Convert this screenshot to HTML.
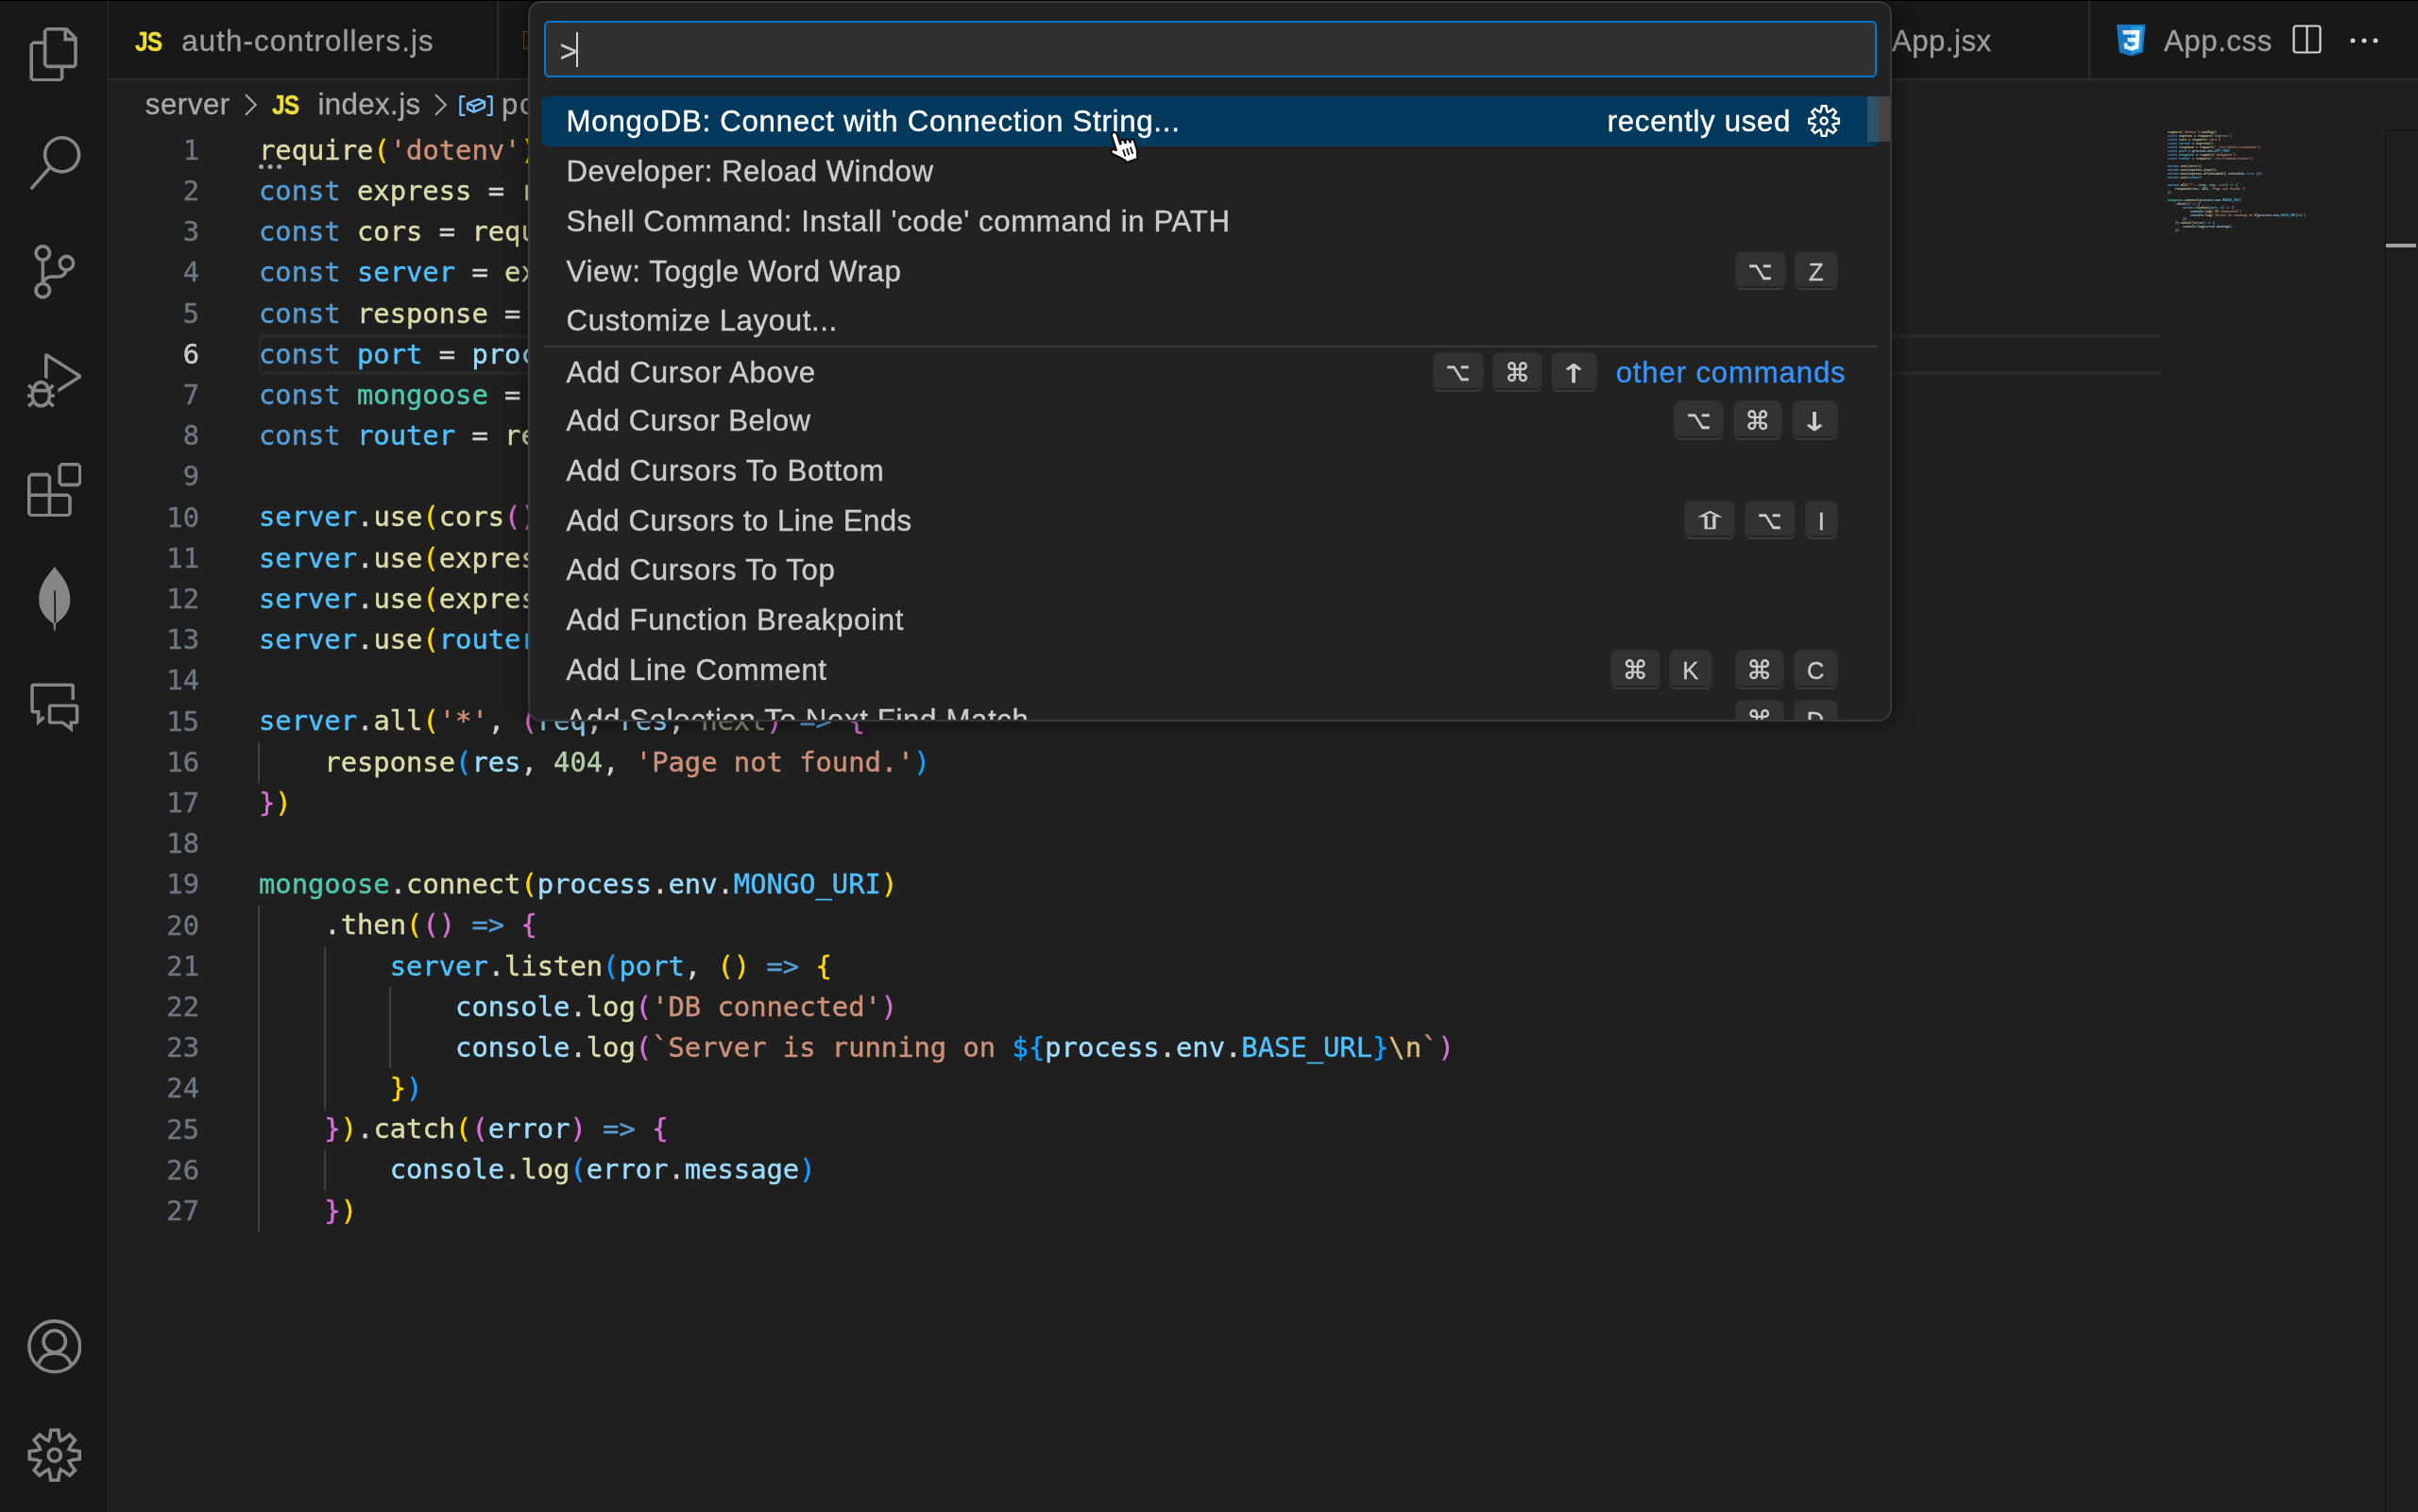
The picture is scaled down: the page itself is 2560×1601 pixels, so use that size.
<!DOCTYPE html>
<html lang="en"><head><meta charset="utf-8"><title>index.js — VS Code</title>
<style>
html,body{margin:0;padding:0;background:#1f1f1f;}
body{width:2560px;height:1601px;overflow:hidden;position:relative;font-family:'Liberation Sans', sans-serif;}
#root{position:absolute;left:0;top:0;width:2560px;height:1601px;overflow:hidden;will-change:transform;}
.b{position:absolute;display:block;}
.tx{position:absolute;white-space:pre;display:block;-webkit-text-stroke:0.35px currentColor;}
.ln{position:absolute;left:120px;width:91px;text-align:right;-webkit-text-stroke:0.42px currentColor;font-family:'DejaVu Sans Mono', 'Liberation Mono', monospace;font-size:28.8px;line-height:43.2px;height:43.2px;}
.code{position:absolute;font-family:'DejaVu Sans Mono', 'Liberation Mono', monospace;font-size:28.8px;line-height:43.2px;white-space:pre;color:#d4d4d4;-webkit-text-stroke:0.42px currentColor;}
.cl{height:43.2px;}
.mm{font-weight:bold;opacity:.78;}
.mm .b1,.mm .b2,.mm .b3{color:#c8c8c8 !important;}
.qi{background:#222222;border:2px solid #383838;border-radius:14px;box-shadow:0 0 19px 5px rgba(0,0,0,.36);box-sizing:border-box;}
.key{position:absolute;box-sizing:border-box;background:#323232;border:1.6px solid #2c2c2c;border-bottom:2.4px solid #3a3a3a;border-radius:7.2px;box-shadow:inset 0 -2px 0 rgba(0,0,0,.25);color:#cccccc;font-family:'DejaVu Sans', 'Liberation Sans', sans-serif;text-align:center;line-height:36px;overflow:hidden;}
.k{color:#569cd6}.f{color:#dcdcaa}.s{color:#ce9178}.v{color:#9cdcfe}.c{color:#4fc1ff}.t{color:#4ec9b0}.n{color:#b5cea8}.p{color:#d4d4d4}.b1{color:#ffd700}.b2{color:#da70d6}.b3{color:#179fff}.e{color:#d7ba7d}.u{color:#8f8f73}</style></head>
<body>
<div id="root">
<div class="b" style="left:274.00px;top:353.80px;width:2126.00px;height:43.20px;background:transparent;box-sizing:border-box;border:4.2px solid #282828;border-left-width:2.4px;"></div>
<div class="b" style="left:2287.50px;top:137.80px;width:272.50px;height:1463.20px;background:#1f1f1f;"></div>
<div class="b" style="left:273.40px;top:785.80px;width:2.00px;height:43.20px;background:#404040;"></div>
<div class="b" style="left:273.40px;top:958.60px;width:2.00px;height:345.60px;background:#404040;"></div>
<div class="b" style="left:342.75px;top:1001.80px;width:2.00px;height:172.80px;background:#404040;"></div>
<div class="b" style="left:412.10px;top:1045.00px;width:2.00px;height:86.40px;background:#404040;"></div>
<div class="b" style="left:342.75px;top:1217.80px;width:2.00px;height:43.20px;background:#404040;"></div>
<div class="ln" style="top:137.80px;color:#6e7681">1</div>
<div class="ln" style="top:181.00px;color:#6e7681">2</div>
<div class="ln" style="top:224.20px;color:#6e7681">3</div>
<div class="ln" style="top:267.40px;color:#6e7681">4</div>
<div class="ln" style="top:310.60px;color:#6e7681">5</div>
<div class="ln" style="top:353.80px;color:#cccccc">6</div>
<div class="ln" style="top:397.00px;color:#6e7681">7</div>
<div class="ln" style="top:440.20px;color:#6e7681">8</div>
<div class="ln" style="top:483.40px;color:#6e7681">9</div>
<div class="ln" style="top:526.60px;color:#6e7681">10</div>
<div class="ln" style="top:569.80px;color:#6e7681">11</div>
<div class="ln" style="top:613.00px;color:#6e7681">12</div>
<div class="ln" style="top:656.20px;color:#6e7681">13</div>
<div class="ln" style="top:699.40px;color:#6e7681">14</div>
<div class="ln" style="top:742.60px;color:#6e7681">15</div>
<div class="ln" style="top:785.80px;color:#6e7681">16</div>
<div class="ln" style="top:829.00px;color:#6e7681">17</div>
<div class="ln" style="top:872.20px;color:#6e7681">18</div>
<div class="ln" style="top:915.40px;color:#6e7681">19</div>
<div class="ln" style="top:958.60px;color:#6e7681">20</div>
<div class="ln" style="top:1001.80px;color:#6e7681">21</div>
<div class="ln" style="top:1045.00px;color:#6e7681">22</div>
<div class="ln" style="top:1088.20px;color:#6e7681">23</div>
<div class="ln" style="top:1131.40px;color:#6e7681">24</div>
<div class="ln" style="top:1174.60px;color:#6e7681">25</div>
<div class="ln" style="top:1217.80px;color:#6e7681">26</div>
<div class="ln" style="top:1261.00px;color:#6e7681">27</div>
<div class="code" style="left:274.0px;top:137.8px"><div class="cl"><span class="f">require</span><span class="b1">(</span><span class="s">'dotenv'</span><span class="b1">)</span><span class="p">.</span><span class="f">config</span><span class="b1">(</span><span class="b1">)</span></div><div class="cl"><span class="k">const</span><span class="f"> express</span><span class="p"> = </span><span class="f">require</span><span class="b1">(</span><span class="s">'express'</span><span class="b1">)</span></div><div class="cl"><span class="k">const</span><span class="f"> cors</span><span class="p"> = </span><span class="f">require</span><span class="b1">(</span><span class="s">'cors'</span><span class="b1">)</span></div><div class="cl"><span class="k">const</span><span class="c"> server</span><span class="p"> = </span><span class="f">express</span><span class="b1">(</span><span class="b1">)</span></div><div class="cl"><span class="k">const</span><span class="f"> response</span><span class="p"> = </span><span class="f">require</span><span class="b1">(</span><span class="s">'./src/utils/responses'</span><span class="b1">)</span></div><div class="cl"><span class="k">const</span><span class="c"> port</span><span class="p"> = </span><span class="v">process</span><span class="p">.</span><span class="v">env</span><span class="p">.</span><span class="c">APP_PORT</span></div><div class="cl"><span class="k">const</span><span class="t"> mongoose</span><span class="p"> = </span><span class="f">require</span><span class="b1">(</span><span class="s">'mongoose'</span><span class="b1">)</span></div><div class="cl"><span class="k">const</span><span class="c"> router</span><span class="p"> = </span><span class="f">require</span><span class="b1">(</span><span class="s">'./src/routes/routes'</span><span class="b1">)</span></div><div class="cl"></div><div class="cl"><span class="c">server</span><span class="p">.</span><span class="f">use</span><span class="b1">(</span><span class="f">cors</span><span class="b2">(</span><span class="b2">)</span><span class="b1">)</span></div><div class="cl"><span class="c">server</span><span class="p">.</span><span class="f">use</span><span class="b1">(</span><span class="f">express</span><span class="p">.</span><span class="f">json</span><span class="b2">(</span><span class="b2">)</span><span class="b1">)</span></div><div class="cl"><span class="c">server</span><span class="p">.</span><span class="f">use</span><span class="b1">(</span><span class="f">express</span><span class="p">.</span><span class="f">urlencoded</span><span class="b2">(</span><span class="b3">{</span><span class="v"> extended</span><span class="p">:</span><span class="k"> true</span><span class="b3"> }</span><span class="b2">)</span><span class="b1">)</span></div><div class="cl"><span class="c">server</span><span class="p">.</span><span class="f">use</span><span class="b1">(</span><span class="c">router</span><span class="b1">)</span></div><div class="cl"></div><div class="cl"><span class="c">server</span><span class="p">.</span><span class="f">all</span><span class="b1">(</span><span class="s">'*'</span><span class="p">, </span><span class="b2">(</span><span class="v">req</span><span class="p">, </span><span class="v">res</span><span class="p">, </span><span class="u">next</span><span class="b2">)</span><span class="k"> =&gt;</span><span class="b2"> {</span></div><div class="cl"><span class="f">    response</span><span class="b3">(</span><span class="v">res</span><span class="p">, </span><span class="n">404</span><span class="p">, </span><span class="s">'Page not found.'</span><span class="b3">)</span></div><div class="cl"><span class="b2">}</span><span class="b1">)</span></div><div class="cl"></div><div class="cl"><span class="t">mongoose</span><span class="p">.</span><span class="f">connect</span><span class="b1">(</span><span class="v">process</span><span class="p">.</span><span class="v">env</span><span class="p">.</span><span class="c">MONGO_URI</span><span class="b1">)</span></div><div class="cl"><span class="p">    .</span><span class="f">then</span><span class="b1">(</span><span class="b2">(</span><span class="b2">)</span><span class="k"> =&gt;</span><span class="b2"> {</span></div><div class="cl"><span class="c">        server</span><span class="p">.</span><span class="f">listen</span><span class="b3">(</span><span class="c">port</span><span class="p">, </span><span class="b1">(</span><span class="b1">)</span><span class="k"> =&gt;</span><span class="b1"> {</span></div><div class="cl"><span class="v">            console</span><span class="p">.</span><span class="f">log</span><span class="b2">(</span><span class="s">'DB connected'</span><span class="b2">)</span></div><div class="cl"><span class="v">            console</span><span class="p">.</span><span class="f">log</span><span class="b2">(</span><span class="s">`Server is running on </span><span class="b3">${</span><span class="v">process</span><span class="p">.</span><span class="v">env</span><span class="p">.</span><span class="c">BASE_URL</span><span class="b3">}</span><span class="e">\n</span><span class="s">`</span><span class="b2">)</span></div><div class="cl"><span class="b1">        }</span><span class="b3">)</span></div><div class="cl"><span class="b2">    }</span><span class="b1">)</span><span class="p">.</span><span class="f">catch</span><span class="b1">(</span><span class="b2">(</span><span class="v">error</span><span class="b2">)</span><span class="k"> =&gt;</span><span class="b2"> {</span></div><div class="cl"><span class="v">        console</span><span class="p">.</span><span class="f">log</span><span class="b3">(</span><span class="v">error</span><span class="p">.</span><span class="v">message</span><span class="b3">)</span></div><div class="cl"><span class="b2">    }</span><span class="b1">)</span></div></div>
<svg class="b" style="left:273.60px;top:173.80px;" width="25.00" height="5.00" viewBox="0 0 25 5" preserveAspectRatio="none"><circle cx="2.5" cy="2.5" r="2.5" fill="#a6a6a6"/><circle cx="12.1" cy="2.5" r="2.5" fill="#a6a6a6"/><circle cx="21.7" cy="2.5" r="2.5" fill="#a6a6a6"/></svg>
<div class="code mm" style="left:2294.5px;top:137.6px;transform:scale(0.11535,0.09259);transform-origin:0 0;"><div class="cl"><span class="f">require</span><span class="b1">(</span><span class="s">'dotenv'</span><span class="b1">)</span><span class="p">.</span><span class="f">config</span><span class="b1">(</span><span class="b1">)</span></div><div class="cl"><span class="k">const</span><span class="f"> express</span><span class="p"> = </span><span class="f">require</span><span class="b1">(</span><span class="s">'express'</span><span class="b1">)</span></div><div class="cl"><span class="k">const</span><span class="f"> cors</span><span class="p"> = </span><span class="f">require</span><span class="b1">(</span><span class="s">'cors'</span><span class="b1">)</span></div><div class="cl"><span class="k">const</span><span class="c"> server</span><span class="p"> = </span><span class="f">express</span><span class="b1">(</span><span class="b1">)</span></div><div class="cl"><span class="k">const</span><span class="f"> response</span><span class="p"> = </span><span class="f">require</span><span class="b1">(</span><span class="s">'./src/utils/responses'</span><span class="b1">)</span></div><div class="cl"><span class="k">const</span><span class="c"> port</span><span class="p"> = </span><span class="v">process</span><span class="p">.</span><span class="v">env</span><span class="p">.</span><span class="c">APP_PORT</span></div><div class="cl"><span class="k">const</span><span class="t"> mongoose</span><span class="p"> = </span><span class="f">require</span><span class="b1">(</span><span class="s">'mongoose'</span><span class="b1">)</span></div><div class="cl"><span class="k">const</span><span class="c"> router</span><span class="p"> = </span><span class="f">require</span><span class="b1">(</span><span class="s">'./src/routes/routes'</span><span class="b1">)</span></div><div class="cl"></div><div class="cl"><span class="c">server</span><span class="p">.</span><span class="f">use</span><span class="b1">(</span><span class="f">cors</span><span class="b2">(</span><span class="b2">)</span><span class="b1">)</span></div><div class="cl"><span class="c">server</span><span class="p">.</span><span class="f">use</span><span class="b1">(</span><span class="f">express</span><span class="p">.</span><span class="f">json</span><span class="b2">(</span><span class="b2">)</span><span class="b1">)</span></div><div class="cl"><span class="c">server</span><span class="p">.</span><span class="f">use</span><span class="b1">(</span><span class="f">express</span><span class="p">.</span><span class="f">urlencoded</span><span class="b2">(</span><span class="b3">{</span><span class="v"> extended</span><span class="p">:</span><span class="k"> true</span><span class="b3"> }</span><span class="b2">)</span><span class="b1">)</span></div><div class="cl"><span class="c">server</span><span class="p">.</span><span class="f">use</span><span class="b1">(</span><span class="c">router</span><span class="b1">)</span></div><div class="cl"></div><div class="cl"><span class="c">server</span><span class="p">.</span><span class="f">all</span><span class="b1">(</span><span class="s">'*'</span><span class="p">, </span><span class="b2">(</span><span class="v">req</span><span class="p">, </span><span class="v">res</span><span class="p">, </span><span class="u">next</span><span class="b2">)</span><span class="k"> =&gt;</span><span class="b2"> {</span></div><div class="cl"><span class="f">    response</span><span class="b3">(</span><span class="v">res</span><span class="p">, </span><span class="n">404</span><span class="p">, </span><span class="s">'Page not found.'</span><span class="b3">)</span></div><div class="cl"><span class="b2">}</span><span class="b1">)</span></div><div class="cl"></div><div class="cl"><span class="t">mongoose</span><span class="p">.</span><span class="f">connect</span><span class="b1">(</span><span class="v">process</span><span class="p">.</span><span class="v">env</span><span class="p">.</span><span class="c">MONGO_URI</span><span class="b1">)</span></div><div class="cl"><span class="p">    .</span><span class="f">then</span><span class="b1">(</span><span class="b2">(</span><span class="b2">)</span><span class="k"> =&gt;</span><span class="b2"> {</span></div><div class="cl"><span class="c">        server</span><span class="p">.</span><span class="f">listen</span><span class="b3">(</span><span class="c">port</span><span class="p">, </span><span class="b1">(</span><span class="b1">)</span><span class="k"> =&gt;</span><span class="b1"> {</span></div><div class="cl"><span class="v">            console</span><span class="p">.</span><span class="f">log</span><span class="b2">(</span><span class="s">'DB connected'</span><span class="b2">)</span></div><div class="cl"><span class="v">            console</span><span class="p">.</span><span class="f">log</span><span class="b2">(</span><span class="s">`Server is running on </span><span class="b3">${</span><span class="v">process</span><span class="p">.</span><span class="v">env</span><span class="p">.</span><span class="c">BASE_URL</span><span class="b3">}</span><span class="e">\n</span><span class="s">`</span><span class="b2">)</span></div><div class="cl"><span class="b1">        }</span><span class="b3">)</span></div><div class="cl"><span class="b2">    }</span><span class="b1">)</span><span class="p">.</span><span class="f">catch</span><span class="b1">(</span><span class="b2">(</span><span class="v">error</span><span class="b2">)</span><span class="k"> =&gt;</span><span class="b2"> {</span></div><div class="cl"><span class="v">        console</span><span class="p">.</span><span class="f">log</span><span class="b3">(</span><span class="v">error</span><span class="p">.</span><span class="v">message</span><span class="b3">)</span></div><div class="cl"><span class="b2">    }</span><span class="b1">)</span></div></div>
<div class="b" style="left:2524.80px;top:137.60px;width:1.40px;height:1463.40px;background:#101010;"></div>
<div class="b" style="left:2525.00px;top:137.60px;width:33.50px;height:1.20px;background:#101010;"></div>
<div class="b" style="left:2526.00px;top:258.00px;width:32.40px;height:4.40px;background:#a0a0a0;"></div>
<span class="tx " style="left:153.80px;top:91.19px;font-size:31.2px;line-height:40.0px;color:#a9a9a9;font-family:'Liberation Sans', sans-serif;letter-spacing:0.557px;">server</span>
<svg class="b" style="left:258.50px;top:99.00px;" width="13.50" height="24.00" viewBox="0 0 13.5 24" preserveAspectRatio="none"><path d="M1 1.2 L11.8 12 L1 22.8" fill="none" stroke="#a9a9a9" stroke-width="2.0"/></svg>
<span class="tx " style="left:287.70px;top:90.94px;font-size:29.6px;line-height:40.0px;color:#f1dd35;font-family:'Liberation Sans', sans-serif;font-weight:bold;letter-spacing:-1.2px;transform:scaleX(.83);transform-origin:0 0;">JS</span>
<span class="tx " style="left:336.50px;top:91.19px;font-size:31.2px;line-height:40.0px;color:#a9a9a9;font-family:'Liberation Sans', sans-serif;letter-spacing:0.406px;">index.js</span>
<svg class="b" style="left:460.00px;top:99.00px;" width="13.50" height="24.00" viewBox="0 0 13.5 24" preserveAspectRatio="none"><path d="M1 1.2 L11.8 12 L1 22.8" fill="none" stroke="#a9a9a9" stroke-width="2.0"/></svg>
<svg class="b" style="left:486.00px;top:100.80px;" width="36.00" height="22.00" viewBox="0 0 36 22" preserveAspectRatio="none"><g fill="none" stroke="#75beff" stroke-width="2.3" stroke-linejoin="round"><path d="M6.5 1.2 H1.4 V20.8 H6.5"/><path d="M29.5 1.2 H34.6 V20.8 H29.5"/><path d="M9 8.5 L20.5 4.2 L27 6.6 L15.8 11.4 Z"/><path d="M9 8.5 V14.4 L15.8 17.6 V11.4"/><path d="M15.8 17.6 L27 12.6 V6.6"/></g></svg>
<span class="tx " style="left:531.00px;top:91.19px;font-size:31.2px;line-height:40.0px;color:#a9a9a9;font-family:'Liberation Sans', sans-serif;letter-spacing:1.562px;">port</span>
<div class="b" style="left:115.20px;top:0.00px;width:2444.80px;height:84.40px;background:#181818;"></div>
<div class="b" style="left:115.20px;top:82.80px;width:2444.80px;height:2.40px;background:#2b2b2b;"></div>
<span class="tx " style="left:143.30px;top:23.74px;font-size:29.6px;line-height:40.0px;color:#f1dd35;font-family:'Liberation Sans', sans-serif;font-weight:bold;letter-spacing:-1.2px;transform:scaleX(.83);transform-origin:0 0;">JS</span>
<span class="tx " style="left:192.30px;top:23.59px;font-size:31.2px;line-height:40.0px;color:#9d9d9d;font-family:'Liberation Sans', sans-serif;letter-spacing:1.124px;">auth-controllers.js</span>
<div class="b" style="left:526.20px;top:1.00px;width:2.00px;height:82.00px;background:#2b2b2b;"></div>
<div class="b" style="left:554.00px;top:33.00px;width:8.00px;height:17.00px;background:transparent;border:1.6px solid #6a4f2c;border-right:none;"></div>
<span class="tx " style="left:2003.00px;top:23.59px;font-size:31.2px;line-height:40.0px;color:#9d9d9d;font-family:'Liberation Sans', sans-serif;letter-spacing:0.460px;">App.jsx</span>
<div class="b" style="left:2211.30px;top:1.00px;width:2.00px;height:82.00px;background:#2b2b2b;"></div>
<svg class="b" style="left:2240.80px;top:26.00px;" width="30.50" height="33.60" viewBox="1 0 22 24.5" preserveAspectRatio="none"><path d="M1 0 H23 L21 21.5 L12 24.5 L3 21.5 Z" fill="#1b76c2"/><path d="M12 1.7 H21.2 L19.5 20.2 L12 22.6 Z" fill="#2b9fdf"/><path d="M5.6 4.4 H12 V7.7 H5.9 Z M9.3 10.3 H12 V13.5 H9.5 Z M6.4 14.2 H9.2 L9.35 16.1 L12 16.9 V20.2 L6.8 18.5 Z" fill="#e6e6e6"/><path d="M12 4.4 H18.6 L17.7 18.5 L12 20.2 V16.9 L14.8 16.1 L15.1 13.5 H12 V10.3 H15.3 L15.5 7.7 H12 Z" fill="#ffffff"/></svg>
<span class="tx " style="left:2291.00px;top:23.59px;font-size:31.2px;line-height:40.0px;color:#9d9d9d;font-family:'Liberation Sans', sans-serif;letter-spacing:0.550px;">App.css</span>
<svg class="b" style="left:2426.50px;top:26.00px;" width="31.00" height="31.00" viewBox="0 0 31 31" preserveAspectRatio="none"><rect x="1.5" y="1.5" width="28" height="28" rx="2.5" fill="none" stroke="#d4d4d4" stroke-width="2.2"/><path d="M15.5 1.5 V29.5" stroke="#d4d4d4" stroke-width="2.2"/></svg>
<svg class="b" style="left:2488.30px;top:39.90px;" width="30.00" height="6.00" viewBox="0 0 30 6" preserveAspectRatio="none"><circle cx="3.0" cy="3" r="2.5" fill="#d4d4d4"/><circle cx="15.0" cy="3" r="2.5" fill="#d4d4d4"/><circle cx="27.0" cy="3" r="2.5" fill="#d4d4d4"/></svg>
<div class="b" style="left:0.00px;top:0.00px;width:114.00px;height:1601.00px;background:#181818;"></div>
<div class="b" style="left:113.60px;top:0.00px;width:1.60px;height:1601.00px;background:#2b2b2b;"></div>
<svg class="b" style="left:28.80px;top:28.80px;" width="57.60" height="57.60" viewBox="0 0 24 24" preserveAspectRatio="none"><path fill="#868686" d="M17.5 0h-9L7 1.5V6H2.5L1 7.5v15.07L2.5 24h12.07L16 22.57V18h4.7l1.3-1.43V4.5L17.5 0zm0 2.12l2.38 2.38H17.5V2.12zm-3 20.38h-12v-15H7v9.07L8.5 18h6v4.5zm6-6h-12v-15H16V6h4.5v10.5z"/></svg>
<svg class="b" style="left:28.80px;top:144.00px;" width="57.60" height="57.60" viewBox="0 0 24 24" preserveAspectRatio="none"><path fill="#868686" d="M15.25 0a8.25 8.25 0 0 0-6.18 13.72L1 22.88l1.12 1 8.05-9.12A8.251 8.251 0 1 0 15.25.01V0zm0 15a6.75 6.75 0 1 1 0-13.5 6.75 6.75 0 0 1 0 13.5z"/></svg>
<svg class="b" style="left:28.80px;top:259.20px;" width="57.60" height="57.60" viewBox="0 0 24 24" preserveAspectRatio="none"><path fill="#868686" d="M21.007 8.222A3.738 3.738 0 0 0 15.045 5.2a3.737 3.737 0 0 0 1.156 6.583 2.988 2.988 0 0 1-2.668 1.67h-2.99a4.456 4.456 0 0 0-2.989 1.165V7.4a3.737 3.737 0 1 0-1.494 0v9.117a3.776 3.776 0 1 0 1.816.099 2.99 2.99 0 0 1 2.668-1.667h2.99a4.484 4.484 0 0 0 4.223-3.039 3.736 3.736 0 0 0 3.25-3.687zM4.565 3.738a2.242 2.242 0 1 1 4.484 0 2.242 2.242 0 0 1-4.484 0zm4.484 16.441a2.242 2.242 0 1 1-4.484 0 2.242 2.242 0 0 1 4.484 0zm8.221-9.715a2.242 2.242 0 1 1 0-4.485 2.242 2.242 0 0 1 0 4.485z"/></svg>
<svg class="b" style="left:28.80px;top:374.40px;" width="57.60" height="57.60" viewBox="0 0 24 24" preserveAspectRatio="none"><path fill="#868686" d="M10.94 13.5l-1.32 1.32a3.73 3.73 0 0 0-7.24 0L1.06 13.5 0 14.56l1.72 1.72-.22.22V18H0v1.5h1.5v.08c.077.489.214.966.41 1.42L0 22.94 1.06 24l1.65-1.65A4.308 4.308 0 0 0 6 24a4.31 4.31 0 0 0 3.29-1.65L10.94 24 12 22.94 10.09 21c.198-.464.336-.951.41-1.45v-.1H12V18h-1.5v-1.5l-.22-.22L12 14.56l-1.06-1.06zM6 13.5a2.25 2.25 0 0 1 2.25 2.25h-4.5A2.25 2.25 0 0 1 6 13.5zm3 6a3.33 3.33 0 0 1-3 3 3.33 3.33 0 0 1-3-3v-2.25h6v2.25zm14.76-9.9v1.26L13.5 17.37V15.6l8.5-5.37L9 2v9.46a5.07 5.07 0 0 0-1.5-.72V.63L8.64 0l15.12 9.6z"/></svg>
<svg class="b" style="left:28.80px;top:489.60px;" width="57.60" height="57.60" viewBox="0 0 24 24" preserveAspectRatio="none"><path fill="#868686" d="M13.5 1.5L15 0h7.5L24 1.5V9l-1.5 1.5H15L13.5 9V1.5zm1.5 0V9h7.5V1.5H15zM0 15V6l1.5-1.5H9L10.5 6v7.5H18l1.5 1.5v7.5L18 24H1.5L0 22.5V15zm9-1.5V6H1.5v7.5H9zM9 15H1.5v7.5H9V15zm1.5 7.5H18V15h-7.5v7.5z"/></svg>
<svg class="b" style="left:28.80px;top:604.80px;overflow:visible;" width="57.60" height="57.60" viewBox="0 0 24 24" preserveAspectRatio="none"><path fill="#868686" d="M12 -2.2 C13.2 0.2 18.9 4.6 18.9 12.6 C18.9 18.4 14.6 21.6 12.55 23 L12.3 26.2 L11.7 26.2 L11.45 23 C9.4 21.6 5.1 18.4 5.1 12.6 C5.1 4.6 10.8 0.2 12 -2.2 Z"/><path fill="#181818" d="M11.75 8.2 L12.45 8.6 L12.6 22.2 L11.85 22.9 Z"/></svg>
<svg class="b" style="left:28.80px;top:720.00px;" width="57.60" height="57.60" viewBox="0 0 24 24" preserveAspectRatio="none"><g fill="none" stroke="#868686" stroke-width="1.45" stroke-linejoin="miter"><path d="M20.1 8.7 V2.9 Q20.1 2.2 19.4 2.2 H2.8 Q2.1 2.2 2.1 2.9 V13.4 Q2.1 14.1 2.8 14.1 H4.85 V18.6 L7.3 16.4"/><path d="M10.5 11.3 H21.2 Q21.9 11.3 21.9 12 V18.1 Q21.9 18.8 21.2 18.8 H19.3 V21.6 L15.6 18.8 H10.5 Q9.8 18.8 9.8 18.1 V12 Q9.8 11.3 10.5 11.3 Z"/></g></svg>
<svg class="b" style="left:28.80px;top:1397.40px;" width="57.60" height="57.60" viewBox="0 0 24 24" preserveAspectRatio="none"><g fill="none" stroke="#868686" stroke-width="1.5"><circle cx="12" cy="12" r="11.2"/><circle cx="12" cy="9.75" r="4.85"/><path d="M4.7 20.3 C5.7 16.6 8.4 15.0 12 15.0 C15.6 15.0 18.3 16.6 19.3 20.3"/></g></svg>
<svg class="b" style="left:28.80px;top:1511.80px;" width="57.60" height="57.60" viewBox="0 0 24 24" preserveAspectRatio="none"><path d="M9.36 5.63 L9.95 3.96 L10.33 0.93 L13.67 0.93 L14.05 3.96 L14.64 5.63 L16.23 4.86 L18.65 2.99 L21.01 5.35 L19.14 7.77 L18.37 9.36 L20.04 9.95 L23.07 10.33 L23.07 13.67 L20.04 14.05 L18.37 14.64 L19.14 16.23 L21.01 18.65 L18.65 21.01 L16.23 19.14 L14.64 18.37 L14.05 20.04 L13.67 23.07 L10.33 23.07 L9.95 20.04 L9.36 18.37 L7.77 19.14 L5.35 21.01 L2.99 18.65 L4.86 16.23 L5.63 14.64 L3.96 14.05 L0.93 13.67 L0.93 10.33 L3.96 9.95 L5.63 9.36 L4.86 7.77 L2.99 5.35 L5.35 2.99 L7.77 4.86 Z" fill="none" stroke="#868686" stroke-width="1.5" stroke-linejoin="miter"/><circle cx="12" cy="12" r="2.75" fill="none" stroke="#868686" stroke-width="1.5"/></svg>
<div class="b qi" style="left:559.2px;top:1.0px;width:1444.0px;height:763.0px;"></div>
<div class="b" style="left:576.00px;top:22.00px;width:1411.40px;height:60.00px;background:#313131;box-sizing:border-box;border:2.4px solid #0078d4;border-radius:5.5px;"></div>
<span class="tx " style="left:592.80px;top:35.39px;font-size:31.2px;line-height:40.0px;color:#cccccc;font-family:'Liberation Sans', sans-serif;">&gt;</span>
<div class="b" style="left:609.80px;top:33.80px;width:2.40px;height:37.20px;background:#d4d4d4;"></div>
<div class="b" style="left:573.20px;top:102.00px;width:1415.40px;height:53.00px;background:#04395e;border-radius:7px;"></div>
<div class="b" style="left:561.2px;top:0;width:1440.0px;height:761.8px;overflow:hidden;border-radius:0 0 12px 12px;">
<span class="tx " style="left:38.40px;top:109.29px;font-size:31.2px;line-height:40.0px;color:#ffffff;font-family:'Liberation Sans', sans-serif;letter-spacing:0.741px;">MongoDB: Connect with Connection String...</span>
<span class="tx " style="left:38.40px;top:162.09px;font-size:31.2px;line-height:40.0px;color:#cccccc;font-family:'Liberation Sans', sans-serif;letter-spacing:0.454px;">Developer: Reload Window</span>
<span class="tx " style="left:38.40px;top:214.89px;font-size:31.2px;line-height:40.0px;color:#cccccc;font-family:'Liberation Sans', sans-serif;letter-spacing:0.630px;">Shell Command: Install 'code' command in PATH</span>
<span class="tx " style="left:38.40px;top:267.69px;font-size:31.2px;line-height:40.0px;color:#cccccc;font-family:'Liberation Sans', sans-serif;letter-spacing:0.639px;">View: Toggle Word Wrap</span>
<span class="tx " style="left:38.40px;top:320.49px;font-size:31.2px;line-height:40.0px;color:#cccccc;font-family:'Liberation Sans', sans-serif;letter-spacing:0.609px;">Customize Layout...</span>
<span class="tx " style="left:38.40px;top:374.59px;font-size:31.2px;line-height:40.0px;color:#cccccc;font-family:'Liberation Sans', sans-serif;letter-spacing:0.699px;">Add Cursor Above</span>
<span class="tx " style="left:38.40px;top:426.09px;font-size:31.2px;line-height:40.0px;color:#cccccc;font-family:'Liberation Sans', sans-serif;letter-spacing:0.479px;">Add Cursor Below</span>
<span class="tx " style="left:38.40px;top:478.89px;font-size:31.2px;line-height:40.0px;color:#cccccc;font-family:'Liberation Sans', sans-serif;letter-spacing:0.722px;">Add Cursors To Bottom</span>
<span class="tx " style="left:38.40px;top:531.69px;font-size:31.2px;line-height:40.0px;color:#cccccc;font-family:'Liberation Sans', sans-serif;letter-spacing:0.442px;">Add Cursors to Line Ends</span>
<span class="tx " style="left:38.40px;top:584.49px;font-size:31.2px;line-height:40.0px;color:#cccccc;font-family:'Liberation Sans', sans-serif;letter-spacing:0.680px;">Add Cursors To Top</span>
<span class="tx " style="left:38.40px;top:637.29px;font-size:31.2px;line-height:40.0px;color:#cccccc;font-family:'Liberation Sans', sans-serif;letter-spacing:0.694px;">Add Function Breakpoint</span>
<span class="tx " style="left:38.40px;top:690.09px;font-size:31.2px;line-height:40.0px;color:#cccccc;font-family:'Liberation Sans', sans-serif;letter-spacing:0.564px;">Add Line Comment</span>
<span class="tx " style="left:38.40px;top:742.89px;font-size:31.2px;line-height:40.0px;color:#cccccc;font-family:'Liberation Sans', sans-serif;letter-spacing:0.649px;">Add Selection To Next Find Match</span>
<div class="key" style="left:1275.80px;top:741.00px;width:51.70px;height:41.5px;"><span style="display:inline-block;font-family:'DejaVu Sans', 'Liberation Sans', sans-serif;font-size:27px;position:relative;top:3.0px;-webkit-text-stroke:0.4px currentColor;">⌘</span></div>
<div class="key" style="left:1337.40px;top:741.00px;width:47.00px;height:41.5px;"><span style="display:inline-block;font-family:'Liberation Sans', sans-serif;font-size:25.5px;position:relative;top:3.2px;-webkit-text-stroke:0.35px currentColor;">D</span></div>
</div>
<div class="b" style="left:576.00px;top:365.60px;width:1411.40px;height:2.20px;background:#393939;border-radius:1px;"></div>
<span class="tx " style="left:1701.80px;top:109.29px;font-size:31.2px;line-height:40.0px;color:#ffffff;font-family:'Liberation Sans', sans-serif;letter-spacing:0.669px;">recently used</span>
<svg class="b" style="left:1914.40px;top:110.60px;" width="34.20" height="34.20" viewBox="0 0 24 24" preserveAspectRatio="none"><path d="M9.28 5.44 L9.98 3.74 L10.38 0.92 L13.62 0.92 L14.02 3.74 L14.72 5.44 L16.41 4.73 L18.69 3.02 L20.98 5.31 L19.27 7.59 L18.56 9.28 L20.26 9.98 L23.08 10.38 L23.08 13.62 L20.26 14.02 L18.56 14.72 L19.27 16.41 L20.98 18.69 L18.69 20.98 L16.41 19.27 L14.72 18.56 L14.02 20.26 L13.62 23.08 L10.38 23.08 L9.98 20.26 L9.28 18.56 L7.59 19.27 L5.31 20.98 L3.02 18.69 L4.73 16.41 L5.44 14.72 L3.74 14.02 L0.92 13.62 L0.92 10.38 L3.74 9.98 L5.44 9.28 L4.73 7.59 L3.02 5.31 L5.31 3.02 L7.59 4.73 Z" fill="none" stroke="#ffffff" stroke-width="1.7" stroke-linejoin="miter"/><circle cx="12" cy="12" r="2.5" fill="none" stroke="#ffffff" stroke-width="1.7"/></svg>
<span class="tx " style="left:1710.70px;top:374.89px;font-size:31.2px;line-height:40.0px;color:#3794ff;font-family:'Liberation Sans', sans-serif;letter-spacing:0.823px;">other commands</span>
<div class="b" style="left:1977.00px;top:102.00px;width:24.40px;height:47.50px;background:rgba(121,121,121,0.4);"></div>
<div class="key" style="left:1837.00px;top:265.80px;width:54.00px;height:41.5px;"><span style="display:inline-block;font-family:'DejaVu Sans', 'Liberation Sans', sans-serif;font-size:27px;position:relative;top:2.0px;transform:scaleX(.82);-webkit-text-stroke:0.5px currentColor;">⌥</span></div>
<div class="key" style="left:1900.00px;top:265.80px;width:45.60px;height:41.5px;"><span style="display:inline-block;font-family:'Liberation Sans', sans-serif;font-size:25.5px;position:relative;top:3.2px;-webkit-text-stroke:0.35px currentColor;">Z</span></div>
<div class="key" style="left:1517.00px;top:373.00px;width:53.80px;height:41.5px;"><span style="display:inline-block;font-family:'DejaVu Sans', 'Liberation Sans', sans-serif;font-size:27px;position:relative;top:2.0px;transform:scaleX(.82);-webkit-text-stroke:0.5px currentColor;">⌥</span></div>
<div class="key" style="left:1580.00px;top:373.00px;width:53.00px;height:41.5px;"><span style="display:inline-block;font-family:'DejaVu Sans', 'Liberation Sans', sans-serif;font-size:27px;position:relative;top:3.0px;-webkit-text-stroke:0.4px currentColor;">⌘</span></div>
<div class="key" style="left:1642.00px;top:373.00px;width:49.00px;height:41.5px;"><span style="display:inline-block;font-family:'DejaVu Sans', 'Liberation Sans', sans-serif;font-size:27px;position:relative;top:4.2px;transform:scaleX(1.35);-webkit-text-stroke:0.5px currentColor;">↑</span></div>
<div class="key" style="left:1772.00px;top:424.20px;width:53.00px;height:41.5px;"><span style="display:inline-block;font-family:'DejaVu Sans', 'Liberation Sans', sans-serif;font-size:27px;position:relative;top:2.0px;transform:scaleX(.82);-webkit-text-stroke:0.5px currentColor;">⌥</span></div>
<div class="key" style="left:1834.80px;top:424.20px;width:51.90px;height:41.5px;"><span style="display:inline-block;font-family:'DejaVu Sans', 'Liberation Sans', sans-serif;font-size:27px;position:relative;top:3.0px;-webkit-text-stroke:0.4px currentColor;">⌘</span></div>
<div class="key" style="left:1897.00px;top:424.20px;width:48.60px;height:41.5px;"><span style="display:inline-block;font-family:'DejaVu Sans', 'Liberation Sans', sans-serif;font-size:27px;position:relative;top:3.6px;transform:scaleX(1.35);-webkit-text-stroke:0.5px currentColor;">↓</span></div>
<div class="key" style="left:1782.80px;top:529.80px;width:54.60px;height:41.5px;"><span style="display:inline-block;font-family:'DejaVu Sans', 'Liberation Sans', sans-serif;font-size:25px;position:relative;top:3.6px;transform:scaleX(2.0);-webkit-text-stroke:0.3px currentColor;">⇧</span></div>
<div class="key" style="left:1847.00px;top:529.80px;width:54.00px;height:41.5px;"><span style="display:inline-block;font-family:'DejaVu Sans', 'Liberation Sans', sans-serif;font-size:27px;position:relative;top:2.0px;transform:scaleX(.82);-webkit-text-stroke:0.5px currentColor;">⌥</span></div>
<div class="key" style="left:1910.90px;top:529.80px;width:34.70px;height:41.5px;"><span style="display:inline-block;font-family:'Liberation Sans', sans-serif;font-size:25.5px;position:relative;top:3.2px;-webkit-text-stroke:0.35px currentColor;">I</span></div>
<div class="key" style="left:1705.00px;top:688.20px;width:52.70px;height:41.5px;"><span style="display:inline-block;font-family:'DejaVu Sans', 'Liberation Sans', sans-serif;font-size:27px;position:relative;top:3.0px;-webkit-text-stroke:0.4px currentColor;">⌘</span></div>
<div class="key" style="left:1767.00px;top:688.20px;width:45.60px;height:41.5px;"><span style="display:inline-block;font-family:'Liberation Sans', sans-serif;font-size:25.5px;position:relative;top:3.2px;-webkit-text-stroke:0.35px currentColor;">K</span></div>
<div class="key" style="left:1837.00px;top:688.20px;width:51.70px;height:41.5px;"><span style="display:inline-block;font-family:'DejaVu Sans', 'Liberation Sans', sans-serif;font-size:27px;position:relative;top:3.0px;-webkit-text-stroke:0.4px currentColor;">⌘</span></div>
<div class="key" style="left:1898.60px;top:688.20px;width:47.00px;height:41.5px;"><span style="display:inline-block;font-family:'Liberation Sans', sans-serif;font-size:25.5px;position:relative;top:3.2px;-webkit-text-stroke:0.35px currentColor;">C</span></div>
<svg class="b" style="left:1172.30px;top:135.60px;overflow:visible;" width="33.50" height="40.50" viewBox="0 0 26 30" preserveAspectRatio="none"><g transform="rotate(-19 13 15)"><path d="M9.6 1.2 C11 1.2 11.9 2.3 11.9 3.8 V11.6 L12.5 11.6 V10.6 C12.5 9.5 13.3 8.9 14.3 8.9 C15.3 8.9 16 9.6 16 10.6 V12 L16.6 12 V11.5 C16.6 10.5 17.3 9.9 18.2 9.9 C19.2 9.9 19.9 10.6 19.9 11.6 V12.9 L20.4 12.9 V12.7 C20.4 11.8 21.1 11.3 21.9 11.3 C22.8 11.3 23.5 11.9 23.5 12.9 V19.5 C23.5 22 22.6 23.5 22 25 V27.2 H11.8 V25.6 C10.3 23.8 8.2 21.4 5.7 19.2 C4.2 17.8 2.7 16.9 2.7 15.5 C2.7 14.3 3.7 13.7 4.7 13.7 C5.9 13.7 6.7 14.5 7.3 15.2 V3.8 C7.3 2.3 8.2 1.2 9.6 1.2 Z" fill="#fff" stroke="#111" stroke-width="1.7" stroke-linejoin="round"/><path d="M12.7 16.6 V22.4 M15.9 16.6 V22.4 M19.1 16.6 V22.4" stroke="#222" stroke-width="1.5"/></g></svg>
<div class="b" style="left:0.00px;top:0.00px;width:2560.00px;height:1.00px;background:#000;"></div>
</div>
</body></html>
